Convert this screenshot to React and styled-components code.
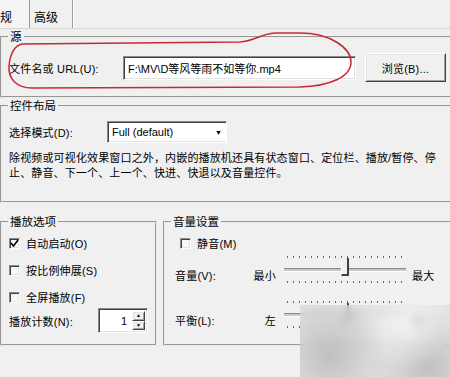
import React from "react";
import styled, { createGlobalStyle, css } from "styled-components";

const GlobalStyle = createGlobalStyle`
  html, body {
    margin: 0;
    padding: 0;
    background: #f0f0f0;
  }
  body {
    font-family: "Liberation Sans", "Noto Sans CJK SC", sans-serif;
    font-size: 11px;
    color: #000;
  }
`;

const sunken = css`
  box-sizing: border-box;
  border: 1px solid;
  border-color: #8a8a8a #fff #fff #8a8a8a;
  box-shadow: inset 1px 1px 0 #404040, inset -1px -1px 0 #e3e3e3;
  background: #fff;
`;

const raised = css`
  box-sizing: border-box;
  border: 1px solid;
  border-color: #fff #404040 #404040 #fff;
  box-shadow: inset 1px 1px 0 #e3e3e3, inset -1px -1px 0 #a0a0a0;
  background: #f0f0f0;
`;

const Window = styled.div`
  position: relative;
  width: 450px;
  height: 377px;
  overflow: hidden;
  background: #f0f0f0;
`;

const TabStrip = styled.div`
  display: flex;
  height: 28px;
  margin-left: -16px;
  border-bottom: 1px solid #d6d6d6;
`;

const Tab = styled.div`
  display: flex;
  align-items: center;
  box-sizing: border-box;
  height: 28px;
  padding: 4px ${(p) => (p.$active ? 17 : 14)}px 0 4px;
  border-right: 1px solid #9c9c9c;
  box-shadow: 1px 0 0 #fff;
  background: ${(p) => (p.$active ? "#f4f4f4" : "#f0f0f0")};
  font-size: 12px;
`;

const Panel = styled.div`
  display: flex;
  flex-direction: column;
  width: 470px;
`;

const Group = styled.fieldset`
  margin: ${(p) => p.$mt || 0}px 0 0 ${(p) => p.$ml || 0}px;
  padding: 0;
  min-width: 0;
  width: ${(p) => p.$w}px;
  box-sizing: border-box;
  border: 2px groove #ececec;
`;

const Legend = styled.legend`
  margin-left: 6px;
  padding: 0 2px;
  line-height: 14px;
  font-size: 11.5px;
`;

const FileRow = styled.div`
  display: flex;
  align-items: center;
  padding: 9px 0 14px 7px;
`;

const Label = styled.span`
  width: ${(p) => p.$w}px;
  flex: none;
  white-space: nowrap;
  letter-spacing: 0.2px;
`;

const TextInput = styled.div`
  ${sunken};
  width: 233px;
  height: 24px;
  display: flex;
  align-items: center;
  padding-left: 4px;
  white-space: nowrap;
`;

const Button = styled.div`
  ${raised};
  width: 81px;
  height: 29px;
  margin-left: 9px;
  display: flex;
  align-items: center;
  justify-content: center;
  letter-spacing: 0.2px;
`;

const LayoutBody = styled.div`
  padding: 8px 0 20px 7px;
`;

const SelectRow = styled.div`
  display: flex;
  align-items: center;
  height: 22px;
`;

const Select = styled.div`
  ${sunken};
  width: 120px;
  height: 22px;
  display: flex;
  align-items: center;
  padding-left: 4px;
`;

const SelectValue = styled.span`
  flex: 1;
`;

const DropButton = styled.div`
  width: 15px;
  height: 18px;
  display: flex;
  align-items: center;
  justify-content: center;
  background: #fff;
  font-size: 7px;
`;

const Description = styled.p`
  margin: 8px 0 0;
  line-height: 15px;
  white-space: nowrap;
  letter-spacing: 0.15px;
`;

const Lower = styled.div`
  display: flex;
  align-items: stretch;
  margin-top: 12px;
`;

const Column = styled.div`
  display: flex;
  flex-direction: column;
  padding: ${(p) => p.$pad};
`;

const CheckRow = styled.label`
  display: flex;
  align-items: center;
  gap: 6px;
  height: 18px;
  margin-top: ${(p) => p.$mt || 0}px;
  padding-left: ${(p) => p.$pl || 0}px;
  letter-spacing: 0.2px;
`;

const Box = styled.span`
  ${sunken};
  width: 11px;
  height: 11px;
  display: inline-flex;
  align-items: center;
  justify-content: center;
  background: #f8f8f8;
`;

const SpinRow = styled.div`
  display: flex;
  align-items: center;
  margin-top: 2px;
  height: 25px;
`;

const Spin = styled.div`
  ${sunken};
  width: 50px;
  height: 25px;
  display: flex;
  align-items: center;
  justify-content: flex-end;
  padding-right: 2px;
`;

const SpinValue = styled.span`
  margin-right: 5px;
`;

const SpinButtons = styled.div`
  display: flex;
  flex-direction: column;
  width: 13px;
  height: 19px;
`;

const SpinBtn = styled.div`
  ${raised};
  flex: 1;
  display: flex;
  align-items: center;
  justify-content: center;
  font-size: 5px;
  line-height: 1;
`;

const SliderRow = styled.div`
  display: grid;
  grid-template-columns: 62px 39px 124px auto;
  column-gap: 4px;
  align-items: center;
  margin-top: ${(p) => p.$mt}px;
`;

const SliderLabel = styled.span`
  margin-top: 10px;
  white-space: nowrap;
  text-align: ${(p) => (p.$right ? "right" : "left")};
  padding-right: ${(p) => (p.$right ? 4 : 0)}px;
  letter-spacing: 0.2px;
`;

const Trackbar = styled.div`
  position: relative;
  display: flex;
  flex-direction: column;
  width: 122px;
  height: 30px;
  padding-top: 1px;
  box-sizing: border-box;
`;

const Ticks = styled.div`
  height: 2px;
  margin: ${(p) => p.$mt}px 3px 0 3px;
  background: repeating-linear-gradient(
    to right,
    #6a6a6a 0 1px,
    transparent 1px 6px
  );
`;

const Track = styled.div`
  height: 2px;
  margin-top: 10px;
  border-top: 1px solid #8a8a8a;
  border-bottom: 1px solid #fff;
  background: #c8c8c8;
`;

const Thumb = styled.div`
  position: absolute;
  top: 3px;
  left: ${(p) => p.$pos}px;
  width: 8px;
  height: 18px;
  box-sizing: border-box;
  border-left: 1px solid #fff;
  border-right: 2px solid #404040;
  border-bottom: 2px solid #404040;
  background: #f0f0f0;
`;

const Ellipse = styled.svg`
  position: absolute;
  top: 0;
  left: 0;
  pointer-events: none;
`;

/* blurred watermark patch over the lower right corner */
const Watermark = styled.div`
  position: absolute;
  left: 300px;
  top: 305px;
  width: 150px;
  height: 72px;
  backdrop-filter: blur(4px);
  background:
    radial-gradient(circle at 20% 70%, rgba(150, 150, 150, 0.45), transparent 45%),
    radial-gradient(circle at 70% 30%, rgba(255, 255, 255, 0.6), transparent 40%),
    radial-gradient(circle at 85% 85%, rgba(140, 140, 140, 0.4), transparent 40%),
    rgba(215, 215, 215, 0.55);
  pointer-events: none;
`;

const Check = () => (
  <svg width="9" height="9" viewBox="0 0 9 9">
    <polyline points="1,4 3.5,7 8,1" fill="none" stroke="#000" strokeWidth="1.6" />
  </svg>
);

const CheckBox = ({ checked, children, mt, pl }) => (
  <CheckRow $mt={mt} $pl={pl}>
    <Box>{checked && <Check />}</Box>
    {children}
  </CheckRow>
);

const Slider = ({ pos }) => (
  <Trackbar>
    <Ticks $mt={0} />
    <Track />
    <Ticks $mt={9} />
    <Thumb $pos={pos} />
  </Trackbar>
);

export default function App() {
  return (
    <Window>
      <GlobalStyle />
      <TabStrip>
        <Tab $active>常规</Tab>
        <Tab>高级</Tab>
      </TabStrip>

      <Panel>
        <Group $w={470} $mt={1}>
          <Legend>源</Legend>
          <FileRow>
            <Label $w={114}>文件名或 URL(U):</Label>
            <TextInput>F:\MV\D等风等雨不如等你.mp4</TextInput>
            <Button>浏览(B)...</Button>
          </FileRow>
        </Group>

        <Group $w={470} $mt={1}>
          <Legend>控件布局</Legend>
          <LayoutBody>
            <SelectRow>
              <Label $w={98}>选择模式(D):</Label>
              <Select>
                <SelectValue>Full (default)</SelectValue>
                <DropButton>▼</DropButton>
              </Select>
            </SelectRow>
            <Description>
              除视频或可视化效果窗口之外，内嵌的播放机还具有状态窗口、定位栏、播放/暂停、停
              <br />
              止、静音、下一个、上一个、快进、快退以及音量控件。
            </Description>
          </LayoutBody>
        </Group>

        <Lower>
          <Group $w={157}>
            <Legend>播放选项</Legend>
            <Column $pad="5px 0 11px 7px">
              <CheckBox checked>自动启动(O)</CheckBox>
              <CheckBox mt={9}>按比例伸展(S)</CheckBox>
              <CheckBox mt={9}>全屏播放(F)</CheckBox>
              <SpinRow>
                <Label $w={89}>播放计数(N):</Label>
                <Spin>
                  <SpinValue>1</SpinValue>
                  <SpinButtons>
                    <SpinBtn>▲</SpinBtn>
                    <SpinBtn>▼</SpinBtn>
                  </SpinButtons>
                </Spin>
              </SpinRow>
            </Column>
          </Group>

          <Group $w={300} $ml={6}>
            <Legend>音量设置</Legend>
            <Column $pad="5px 0 12px 10px">
              <CheckBox pl={5}>静音(M)</CheckBox>
              <SliderRow $mt={3}>
                <SliderLabel>音量(V):</SliderLabel>
                <SliderLabel $right>最小</SliderLabel>
                <Slider pos={57} />
                <SliderLabel>最大</SliderLabel>
              </SliderRow>
              <SliderRow $mt={15}>
                <SliderLabel>平衡(L):</SliderLabel>
                <SliderLabel $right>左</SliderLabel>
                <Slider pos={57} />
                <SliderLabel>右</SliderLabel>
              </SliderRow>
            </Column>
          </Group>
        </Lower>
      </Panel>

      <Ellipse width="450" height="100">
        <path
          d="M22 44 L240 42 C255 41 260 34 275 33 L300 33 C330 33 351 48 351 62 C351 77 330 86 300 87 L32 88 C16 88 8 78 9 66 C10 55 14 46 22 44 Z"
          fill="none"
          stroke="#c9283a"
          strokeWidth="1.5"
        />
      </Ellipse>
      <Watermark />
    </Window>
  );
}
